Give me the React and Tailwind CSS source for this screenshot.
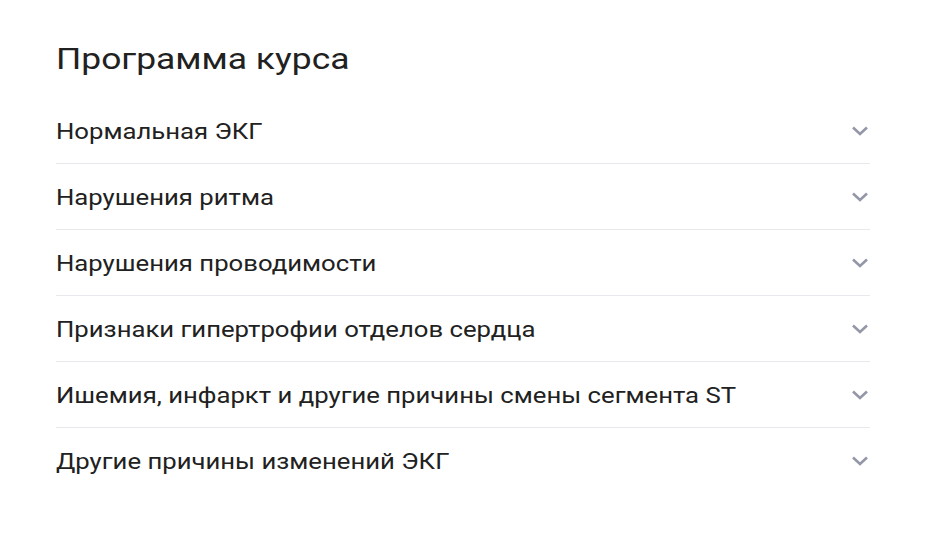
import { useState } from 'react';

const sections = [
  'Нормальная ЭКГ',
  'Нарушения ритма',
  'Нарушения проводимости',
  'Признаки гипертрофии отделов сердца',
  'Ишемия, инфаркт и другие причины смены сегмента ST',
  'Другие причины изменений ЭКГ',
];

function Chevron() {
  return (
    <svg width="18" height="10" viewBox="0 0 18 10" fill="none" className="shrink-0">
      <path d="M2 1.5l7 6.5 7-6.5" stroke="#9497a8" strokeWidth="2.6" strokeLinecap="butt" strokeLinejoin="miter" />
    </svg>
  );
}

export default function App() {
  const [open, setOpen] = useState(null);

  return (
    <div className="min-h-screen bg-white px-[56px] pt-[39px] font-['Roboto',sans-serif] text-[#212121]">
      <div className="w-[814px]">
        <h2 className="mb-[19px] text-[30px] leading-[40px] font-normal">
          <span className="inline-block origin-left scale-x-[1.18] whitespace-nowrap">Программа курса</span>
        </h2>
        <div>
          {sections.map((title, i) => (
            <div
              key={title}
              className={i < sections.length - 1 ? 'border-b border-[#e8e8ed]' : ''}
            >
              <button
                onClick={() => setOpen(open === i ? null : i)}
                className="flex h-[65px] w-full items-center justify-between text-left"
              >
                <span className="inline-block origin-left scale-x-[1.168] whitespace-nowrap pt-[2px] text-[22px] leading-[28px]">
                  {title}
                </span>
                <span className="mr-[1px]">
                  <Chevron />
                </span>
              </button>
            </div>
          ))}
        </div>
      </div>
    </div>
  );
}
